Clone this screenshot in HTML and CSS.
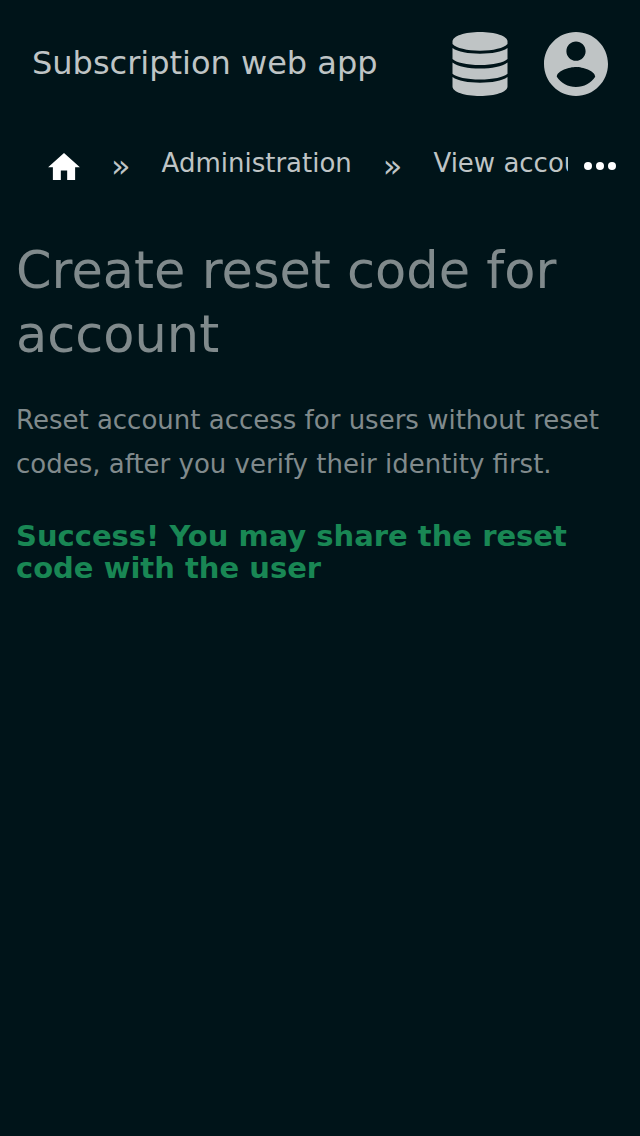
FILE: index.html
```
<!DOCTYPE html>
<html lang="en">
<head>
<meta charset="utf-8">
<title>Subscription web app</title>
<meta name="viewport" content="width=device-width">
<link rel="stylesheet" href="styles.css">
</head>
<body>
<header class="topbar">
  <a class="brand" href="#">Subscription web app</a>
  <button class="icon-button" type="button" aria-label="Data">
    <svg class="icon" viewBox="0 0 64 64" fill="currentColor" aria-hidden="true">
      <path d="M32 0C17 0 4.500 4 4.500 9.500V12C8 16 19 18.700 32 18.700S56 16 59.500 12V9.500C59.500 4 47 0 32 0Z"/>
      <path d="M4.500 16C10 20 20 21.700 32 21.700S54 20 59.500 16V27C56 30.500 45 33 32 33S8 30.500 4.500 27Z"/>
      <path d="M4.500 30.500C10 34.500 20 36.500 32 36.500S54 34.500 59.500 30.500V41.700C56 45 45 47.500 32 47.500S8 45 4.500 41.700Z"/>
      <path d="M4.500 45C10 49 20 50.700 32 50.700S54 49 59.500 45V54.500C59.500 60 47 64 32 64S4.500 60 4.500 54.500Z"/>
    </svg>
  </button>
  <button class="icon-button" type="button" aria-label="Account">
    <svg class="icon" viewBox="2 2 20 20" fill="currentColor" aria-hidden="true">
      <path d="M12 2C6.480 2 2 6.480 2 12s4.480 10 10 10 10-4.480 10-10S17.520 2 12 2zm0 3c1.660 0 3 1.340 3 3s-1.340 3-3 3-3-1.340-3-3 1.340-3 3-3zm0 14.200c-2.500 0-4.710-1.280-6-3.220.030-1.990 4-3.080 6-3.080 1.990 0 5.970 1.090 6 3.080-1.290 1.940-3.500 3.220-6 3.220z"/>
    </svg>
  </button>
</header>
<nav class="breadcrumbs" aria-label="Breadcrumb">
  <div class="trail">
    <a class="home" href="#" aria-label="Home">
      <svg class="home-icon" viewBox="2 3 20 17" fill="currentColor" aria-hidden="true"><path d="M10 20v-6h4v6h5v-8h3L12 3 2 12h3v8z"/></svg>
    </a>
    <span class="separator">»</span>
    <a class="crumb" href="#">Administration</a>
    <span class="separator">»</span>
    <a class="crumb" href="#">View account</a>
  </div>
  <button class="more" type="button" aria-label="More">
    <svg class="more-icon" viewBox="0 0 32 8" fill="currentColor" aria-hidden="true"><circle cx="4" cy="4" r="4"/><circle cx="16" cy="4" r="4"/><circle cx="28" cy="4" r="4"/></svg>
  </button>
</nav>
<main class="content">
  <h1 class="title">Create reset code for account</h1>
  <p class="lead">Reset account access for users without reset codes, after you verify their identity first.</p>
  <p class="success" role="status">Success! You may share the reset code with the user</p>
</main>
</body>
</html>
```

FILE: styles.css
```
body {
  margin: 0;
  background: #001419;
  color: #bfc4c5;
  font-family: "DejaVu Sans", sans-serif;
}

a {
  color: inherit;
  text-decoration: none;
}

button {
  padding: 0;
  border: 0;
  background: none;
  color: inherit;
}

svg {
  display: block;
}

.topbar {
  display: flex;
  align-items: flex-start;
  gap: 32px;
  padding: 32px;
}

.brand {
  flex: 1;
  font-size: 32px;
  line-height: 62px;
  white-space: nowrap;
}

.icon {
  width: 64px;
  height: 64px;
}

.breadcrumbs {
  display: flex;
  align-items: center;
  gap: 16px;
  height: 76px;
  padding: 0 24px 0 48px;
}

.trail {
  flex: 1;
  min-width: 0;
  display: flex;
  align-items: center;
  gap: 31px;
  overflow: hidden;
  white-space: nowrap;
  font-size: 26px;
}

.crumb {
  padding-bottom: 6px;
}

.home,
.more {
  color: #fff;
}

.home-icon {
  width: 32px;
  height: 27px;
}

.separator {
  font-size: 32px;
  line-height: 36px;
}

.more-icon {
  width: 32px;
  height: 8px;
}

.content {
  padding: 35px 16px;
}

.title {
  margin: 0 0 31px;
  color: #808a8c;
  font-size: 51px;
  font-weight: 400;
  line-height: 64px;
}

.lead {
  margin: 0 0 34px;
  color: #808a8c;
  font-size: 26px;
  line-height: 44px;
}

.success {
  margin: 0;
  color: #198754;
  font-size: 29px;
  font-weight: 700;
  line-height: 32px;
}
```
